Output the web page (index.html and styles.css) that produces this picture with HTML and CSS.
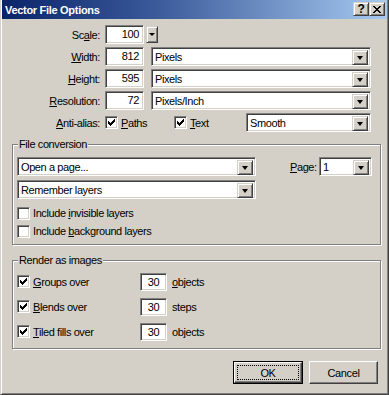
FILE: index.html
```html
<!DOCTYPE html>
<html>
<head>
<meta charset="utf-8">
<link rel="stylesheet" href="styles.css">
</head>
<body>
<div class="win">
  <div class="titlebar">
    <span class="title">Vector File Options</span>
    <div class="tbtns">
      <span class="tbtn help">?</span>
      <span class="tbtn close"><svg width="8" height="7" viewBox="0 0 8 7"><path d="M0 0h2v1h-2zM1 1h2v1h-2zM2 2h4v1h-4zM3 3h2v1h-2zM2 4h4v1h-4zM1 5h2v1h-2zM0 6h2v1h-2zM6 0h2v1h-2zM5 1h2v1h-2zM5 5h2v1h-2zM6 6h2v1h-2z" fill="#000"/></svg></span>
    </div>
  </div>
  <div class="content">
    <div class="row">
      <span class="lbl">Sc<u>a</u>le:</span>
      <div class="field num">100</div>
      <span class="btn spin"><i class="tri small"></i></span>
    </div>
    <div class="row">
      <span class="lbl"><u>W</u>idth:</span>
      <div class="field num">812</div>
      <div class="field select sel-wide"><span class="val">Pixels</span><span class="btn drop"><i class="tri"></i></span></div>
    </div>
    <div class="row">
      <span class="lbl"><u>H</u>eight:</span>
      <div class="field num">595</div>
      <div class="field select sel-wide"><span class="val">Pixels</span><span class="btn drop"><i class="tri"></i></span></div>
    </div>
    <div class="row">
      <span class="lbl"><u>R</u>esolution:</span>
      <div class="field num">72</div>
      <div class="field select sel-wide"><span class="val">Pixels/Inch</span><span class="btn drop"><i class="tri"></i></span></div>
    </div>
    <div class="row">
      <span class="lbl"><u>A</u>nti-alias:</span>
      <span class="chk-item paths"><span class="chk on"><svg width="7" height="7" viewBox="0 0 7 7"><path d="M0 2h1v3h-1zM1 3h1v3h-1zM2 4h1v3h-1zM3 3h1v3h-1zM4 2h1v3h-1zM5 1h1v3h-1zM6 0h1v3h-1z" fill="#000"/></svg></span><span class="ctext"><u>P</u>aths</span></span>
      <span class="chk-item textc"><span class="chk on"><svg width="7" height="7" viewBox="0 0 7 7"><path d="M0 2h1v3h-1zM1 3h1v3h-1zM2 4h1v3h-1zM3 3h1v3h-1zM4 2h1v3h-1zM5 1h1v3h-1zM6 0h1v3h-1z" fill="#000"/></svg></span><span class="ctext"><u>T</u>ext</span></span>
      <div class="field select sel-smooth"><span class="val">Smooth</span><span class="btn drop"><i class="tri"></i></span></div>
    </div>

    <fieldset class="group g1">
      <legend>File conversion</legend>
      <div class="grow">
        <div class="field select sel-conv"><span class="val">Open a page...</span><span class="btn drop"><i class="tri"></i></span></div>
        <span class="page-lbl"><u>P</u>age:</span>
        <div class="field select sel-page"><span class="val">1</span><span class="btn drop"><i class="tri"></i></span></div>
      </div>
      <div class="grow second">
        <div class="field select sel-conv"><span class="val">Remember layers</span><span class="btn drop"><i class="tri"></i></span></div>
      </div>
      <div class="crow first"><span class="chk"></span><span class="ctext">Include <u>i</u>nvisible layers</span></div>
      <div class="crow"><span class="chk"></span><span class="ctext">Include <u>b</u>ackground layers</span></div>
    </fieldset>

    <fieldset class="group g2">
      <legend>Render as images</legend>
      <div class="rrow">
        <span class="rleft"><span class="chk on"><svg width="7" height="7" viewBox="0 0 7 7"><path d="M0 2h1v3h-1zM1 3h1v3h-1zM2 4h1v3h-1zM3 3h1v3h-1zM4 2h1v3h-1zM5 1h1v3h-1zM6 0h1v3h-1z" fill="#000"/></svg></span><span class="ctext"><u>G</u>roups over</span></span>
        <div class="field small-num">30</div><span class="unit"><u>o</u>bjects</span>
      </div>
      <div class="rrow">
        <span class="rleft"><span class="chk on"><svg width="7" height="7" viewBox="0 0 7 7"><path d="M0 2h1v3h-1zM1 3h1v3h-1zM2 4h1v3h-1zM3 3h1v3h-1zM4 2h1v3h-1zM5 1h1v3h-1zM6 0h1v3h-1z" fill="#000"/></svg></span><span class="ctext"><u>B</u>lends over</span></span>
        <div class="field small-num">30</div><span class="unit">steps</span>
      </div>
      <div class="rrow">
        <span class="rleft"><span class="chk on"><svg width="7" height="7" viewBox="0 0 7 7"><path d="M0 2h1v3h-1zM1 3h1v3h-1zM2 4h1v3h-1zM3 3h1v3h-1zM4 2h1v3h-1zM5 1h1v3h-1zM6 0h1v3h-1z" fill="#000"/></svg></span><span class="ctext"><u>T</u>iled fills over</span></span>
        <div class="field small-num">30</div><span class="unit">objects</span>
      </div>
    </fieldset>

    <div class="actions">
      <span class="pbtn default"><span class="inner"><span class="focus">OK</span></span></span>
      <span class="pbtn"><span class="inner">Cancel</span></span>
    </div>
  </div>
</div>
</body>
</html>
```

FILE: styles.css
```css
* { box-sizing: border-box; }
html, body { margin: 0; padding: 0; background: #d4d0c8; }
body {
  font-family: "Liberation Sans", Arial, sans-serif;
  font-size: 11px;
  letter-spacing: -0.4px;
  color: #000;
}
.win {
  width: 389px;
  height: 395px;
  background: #d4d0c8;
  border: 1px solid;
  border-top: 0;
  border-color: #d4d0c8 #404040 #404040 #d4d0c8;
  box-shadow: inset 1px 0 #fff, inset -1px -1px #808080;
  padding: 0 1px 1px 1px;
}
.titlebar {
  height: 19px;
  background: linear-gradient(90deg, #0a246a 0%, #3a5a9a 40%, #a6caf0 100%);
  display: flex;
  align-items: center;
  justify-content: space-between;
  padding: 0 2px 0 3px;
}
.title {
  color: #fff;
  font-weight: bold;
  letter-spacing: -0.3px;
}
.tbtns { display: flex; gap: 0; margin-top: -1px; }
.tbtn {
  width: 16px;
  height: 14px;
  background: #d4d0c8;
  border: 1px solid;
  border-color: #d4d0c8 #404040 #404040 #d4d0c8;
  box-shadow: inset 1px 1px #fff, inset -1px -1px #808080;
  display: flex;
  align-items: center;
  justify-content: center;
  font-weight: bold;
  font-size: 12px;
  line-height: 12px;
}
.content { padding-top: 6px; }
.row {
  display: flex;
  align-items: center;
  height: 19px;
  margin-bottom: 3px;
}
.lbl {
  width: 98px;
  text-align: right;
  margin-right: 5px;
}
.field {
  background: #fff;
  border: 1px solid;
  border-color: #808080 #fff #fff #808080;
  box-shadow: inset 1px 1px #404040, inset -1px -1px #d4d0c8;
  height: 19px;
  line-height: 17px;
}
.num {
  width: 39px;
  text-align: right;
  padding-right: 4px;
}
.btn {
  background: #d4d0c8;
  border: 1px solid;
  border-color: #d4d0c8 #404040 #404040 #d4d0c8;
  box-shadow: inset 1px 1px #fff, inset -1px -1px #808080;
  display: flex;
  align-items: center;
  justify-content: center;
}
.spin { width: 12px; height: 17px; margin-left: 2px; }
.tri {
  display: block;
  width: 0; height: 0;
  border-left: 3.5px solid transparent;
  border-right: 3.5px solid transparent;
  border-top: 4px solid #000;
}
.tri.small {
  border-left-width: 3px;
  border-right-width: 3px;
  border-top-width: 3px;
}
.select {
  display: flex;
  align-items: stretch;
  padding: 2px;
}
.select .val { flex: 1; line-height: 15px; padding-left: 1px; white-space: nowrap; overflow: hidden; }
.select .drop { width: 16px; height: 15px; }
.sel-wide { width: 220px; margin-left: 7px; }
.chk-item { display: flex; align-items: center; }
.chk-item.paths { width: 69px; }
.chk-item.textc { width: 72px; }
.chk {
  width: 13px;
  height: 13px;
  flex: none;
  background: #fff;
  border: 1px solid;
  border-color: #808080 #fff #fff #808080;
  box-shadow: inset 1px 1px #404040, inset -1px -1px #d4d0c8;
  display: flex;
  align-items: center;
  justify-content: center;
}
.ctext { margin-left: 3px; white-space: nowrap; }
.sel-smooth { width: 125px; }

.group {
  margin: 6px 6px 0 10px;
  border: 1px solid #808080;
  box-shadow: inset 1px 1px #fff, 1px 1px #fff;
  padding: 0 7px 4px 4px;
  min-width: 0;
}
.group legend {
  padding: 0 1px;
  margin-left: 1px;
  background: #d4d0c8;
  line-height: 13px;
}
.grow { display: flex; align-items: center; margin-top: 6px; }
.grow.second { margin-top: 4px; }
.sel-conv { width: 239px; }
.page-lbl { margin-left: 34px; width: 29px; }
.sel-page { width: 53px; }
.crow { display: flex; align-items: center; height: 18px; }
.crow.first { margin-top: 5px; }

.g2 { margin-top: 9px; padding-top: 2px; padding-bottom: 4px; }
.rrow { display: flex; align-items: center; height: 25px; }
.rleft { display: flex; align-items: center; width: 123px; }
.small-num { width: 27px; height: 18px; line-height: 16px; text-align: center; }
.unit { margin-left: 5px; }

.actions {
  display: flex;
  justify-content: flex-end;
  gap: 6px;
  margin: 12px 9px 0 0;
}
.pbtn {
  width: 69px;
  height: 23px;
  background: #d4d0c8;
  border: 1px solid;
  border-color: #fff #404040 #404040 #fff;
  box-shadow: inset -1px -1px #808080;
  display: flex;
  align-items: center;
  justify-content: center;
}
.pbtn .inner { display: flex; align-items: center; justify-content: center; width: 100%; height: 100%; }
.pbtn.default {
  border: 1px solid #000;
  width: 70px;
}
.pbtn.default .inner {
  border: 1px solid;
  border-color: #fff #404040 #404040 #fff;
  box-shadow: inset -1px -1px #808080;
  padding: 2px;
}
.focus {
  border: 1px dotted #000;
  width: 100%;
  height: 100%;
  display: flex;
  align-items: center;
  justify-content: center;
}
```
